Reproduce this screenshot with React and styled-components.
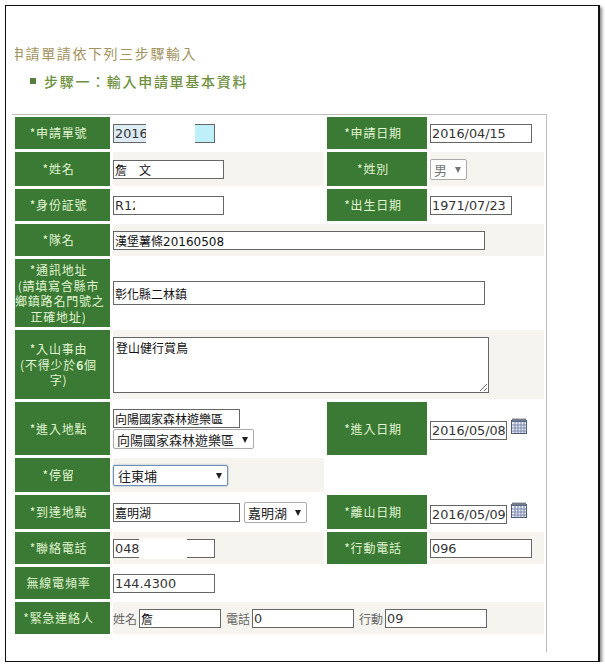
import styled, { createGlobalStyle } from "styled-components";

const GlobalStyle = createGlobalStyle`
  body {
    margin: 0;
    background: #fff;
    font-family: "DejaVu Sans", "Noto Sans CJK TC", sans-serif;
  }
`;

const CalendarIcon = () => (
  <CalendarSvg viewBox="0 0 16 16">
    <rect x="0.5" y="2.5" width="15" height="13" fill="#e6ebf5" stroke="#4e5a78" />
    <rect x="1" y="1" width="14" height="3" fill="#5a6680" />
    <path d="M2 0v3M4 0v3M6 0v3M8 0v3M10 0v3M12 0v3M14 0v3" stroke="#8d8f99" strokeWidth="1" />
    <path d="M1 7h14M1 10h14M1 13h14M4 4v11M7 4v11M10 4v11M13 4v11" stroke="#7b88aa" strokeWidth="1" />
  </CalendarSvg>
);

const App = () => {
  return (
    <Frame>
      <GlobalStyle />
      <Title>
        <TitleText>申請單請依下列三步驟輸入</TitleText>
      </Title>
      <Step>
        <Bullet />
        步驟一：輸入申請單基本資料
      </Step>
      <Panel>
        <FormTable>
          <colgroup>
            <col width="95" />
            <col width="211" />
            <col width="100" />
            <col width="114" />
          </colgroup>
          <tbody>
            <tr>
              <Label $h={32}>*申請單號</Label>
              <Cell>
                <Field>
                  <Input $w={102} $selected defaultValue="2016" />
                  <Patch $left={33} $w={49} />
                </Field>
              </Cell>
              <Label>*申請日期</Label>
              <Cell>
                <Input $w={102} defaultValue="2016/04/15" />
              </Cell>
            </tr>
            <tr>
              <Label $h={34}>*姓名</Label>
              <Cell $striped>
                <Input $w={111} $cjk defaultValue="詹　文" />
              </Cell>
              <Label>*姓別</Label>
              <Cell $striped>
                <Picker $w={37} $h={21} $muted>
                  <select defaultValue="男">
                    <option>男</option>
                  </select>
                </Picker>
              </Cell>
            </tr>
            <tr>
              <Label $h={32}>*身份証號</Label>
              <Cell>
                <Field>
                  <Input $w={111} defaultValue="R12" />
                  <Patch $left={22} $w={50} $inner />
                </Field>
              </Cell>
              <Label>*出生日期</Label>
              <Cell>
                <Input $w={82} defaultValue="1971/07/23" />
              </Cell>
            </tr>
            <tr>
              <Label $h={32}>*隊名</Label>
              <Cell colSpan={3} $striped>
                <Input $w={372} $cjk defaultValue="漢堡薯條20160508" />
              </Cell>
            </tr>
            <tr>
              <Label $h={68}>
                *通訊地址
                <br />
                (請填寫含縣市
                <br />
                鄉鎮路名門號之
                <br />
                正確地址)
              </Label>
              <Cell colSpan={3}>
                <Input $w={372} $h={24} $cjk defaultValue="彰化縣二林鎮" />
              </Cell>
            </tr>
            <tr>
              <Label $h={69}>
                *入山事由
                <br />
                (不得少於<b>6</b>個
                <br />
                字)
              </Label>
              <Cell colSpan={3} $striped>
                <Memo defaultValue="登山健行賞鳥" />
              </Cell>
            </tr>
            <tr>
              <Label $h={53}>*進入地點</Label>
              <Cell>
                <Stack>
                  <Input $w={127} $cjk defaultValue="向陽國家森林遊樂區" />
                  <Picker $w={141}>
                    <select defaultValue="向陽國家森林遊樂區">
                      <option>向陽國家森林遊樂區</option>
                    </select>
                  </Picker>
                </Stack>
              </Cell>
              <Label>*進入日期</Label>
              <Cell>
                <DateRow>
                  <Input $w={77} defaultValue="2016/05/08" />
                  <CalendarIcon />
                </DateRow>
              </Cell>
            </tr>
            <tr>
              <Label $h={34}>*停留</Label>
              <Cell $striped>
                <Picker $w={115} $h={21} $focused>
                  <select defaultValue="往東埔">
                    <option>往東埔</option>
                  </select>
                </Picker>
              </Cell>
              <td colSpan={2} />
            </tr>
            <tr>
              <Label $h={34}>*到達地點</Label>
              <Cell>
                <InlineRow>
                  <Input $w={127} $cjk defaultValue="嘉明湖" />
                  <Picker $w={63} $h={21}>
                    <select defaultValue="嘉明湖">
                      <option>嘉明湖</option>
                    </select>
                  </Picker>
                </InlineRow>
              </Cell>
              <Label>*離山日期</Label>
              <Cell>
                <DateRow>
                  <Input $w={77} defaultValue="2016/05/09" />
                  <CalendarIcon />
                </DateRow>
              </Cell>
            </tr>
            <tr>
              <Label $h={32}>*聯絡電話</Label>
              <Cell $striped>
                <Field>
                  <Input $w={102} defaultValue="048" />
                  <Patch $left={26} $w={48} />
                </Field>
              </Cell>
              <Label>*行動電話</Label>
              <Cell $striped>
                <Input $w={102} defaultValue="096" />
              </Cell>
            </tr>
            <tr>
              <Label $h={32}>無線電頻率</Label>
              <Cell colSpan={3}>
                <Input $w={102} defaultValue="144.4300" />
              </Cell>
            </tr>
            <tr>
              <Label $h={32}>*緊急連絡人</Label>
              <Cell colSpan={3} $striped>
                <ContactRow>
                  姓名
                  <Input $w={82} $cjk defaultValue="詹" />
                  <ContactLabel>電話</ContactLabel>
                  <Input $w={102} defaultValue="0" />
                  <ContactLabel>行動</ContactLabel>
                  <Input $w={102} defaultValue="09" />
                </ContactRow>
              </Cell>
            </tr>
          </tbody>
        </FormTable>
      </Panel>
    </Frame>
  );
};

const Frame = styled.div`
  width: 592px;
  height: 620px;
  margin: 5px 0 0 5px;
  padding-top: 35px;
  border: 1px solid #111;
  border-right-width: 2px;
  box-shadow: 2px 2px 3px #8a8a8a;
  font-family: "Noto Sans CJK TC", sans-serif;
`;

const Title = styled.div`
  margin-left: 9px;
  overflow: hidden;
  height: 24px;
  line-height: 24px;
`;

const TitleText = styled.div`
  margin-left: -5px;
  font-size: 14px;
  letter-spacing: 1.6px;
  color: #a3935e;
  white-space: nowrap;
`;

const Step = styled.div`
  display: flex;
  align-items: center;
  margin: 4px 0 0 24px;
  height: 24px;
  font-size: 14px;
  font-weight: 500;
  letter-spacing: 1.7px;
  color: #6f9140;
`;

const Bullet = styled.span`
  width: 6px;
  height: 6px;
  margin-right: 8px;
  background: #55803f;
`;

const Panel = styled.div`
  width: 534px;
  height: 537px;
  margin: 21px 0 0 6px;
  border-top: 1px solid #bdbdbd;
  border-right: 1px solid #bdbdbd;
`;

const FormTable = styled.table`
  border-collapse: separate;
  border-spacing: 3px;
  table-layout: fixed;
  width: 532px;
  margin-top: -1px;
`;

const Label = styled.td`
  box-sizing: border-box;
  height: ${(p) => (p.$h ? `${p.$h}px` : "auto")};
  padding: 0 8px 0 0;
  background: #3b7a34;
  color: #e0f5d2;
  font-size: 12px;
  line-height: 15.5px;
  letter-spacing: 0.8px;
  text-align: center;
  white-space: nowrap;
  overflow: hidden;
`;

const Cell = styled.td`
  padding: 0;
  background: ${(p) => (p.$striped ? "#f5f4ee" : "transparent")};
  vertical-align: middle;
`;

const Input = styled.input.attrs({ readOnly: true })`
  display: block;
  box-sizing: border-box;
  width: ${(p) => p.$w}px;
  height: ${(p) => p.$h || 19}px;
  padding: 0 1px;
  border: 1px solid #666;
  border-radius: 0;
  outline: none;
  background: ${(p) =>
    p.$selected ? "linear-gradient(90deg, #dcebf4 33px, #bff0fa 33px)" : "#fff"};
  color: ${(p) => (p.$cjk ? "#111" : "#333")};
  font-family: "DejaVu Sans", "Noto Sans CJK TC", sans-serif;
  font-size: ${(p) => (p.$cjk ? 12 : 12.8)}px;
`;

const Field = styled.div`
  position: relative;
  width: fit-content;
`;

const Patch = styled.span`
  position: absolute;
  top: ${(p) => (p.$inner ? 1 : -1)}px;
  bottom: ${(p) => (p.$inner ? 1 : -1)}px;
  left: ${(p) => p.$left}px;
  width: ${(p) => p.$w}px;
  background: #fff;
`;

const Picker = styled.div`
  position: relative;
  width: ${(p) => p.$w}px;
  height: ${(p) => p.$h || 20}px;

  select {
    appearance: none;
    box-sizing: border-box;
    display: block;
    width: 100%;
    height: 100%;
    padding: 0 0 0 ${(p) => (p.$focused ? 4 : 3)}px;
    border: 1px solid ${(p) => (p.$focused ? "#6f8fb0" : "#aaa")};
    border-radius: 2px;
    outline: none;
    background: #fff;
    box-shadow: ${(p) => (p.$focused ? "0 0 2px #7aa0c8" : "none")};
    color: ${(p) => (p.$muted ? "#777" : "#222")};
    font-family: "Noto Sans CJK TC", sans-serif;
    font-size: 13px;
  }

  &::after {
    content: "";
    position: absolute;
    right: 6px;
    top: 50%;
    margin-top: -2px;
    border-left: 3.5px solid transparent;
    border-right: 3.5px solid transparent;
    border-top: 6px solid ${(p) => (p.$muted ? "#777" : "#222")};
  }
`;

const Memo = styled.textarea.attrs({ readOnly: true })`
  display: block;
  box-sizing: border-box;
  width: 376px;
  height: 56px;
  padding: 1px 2px;
  border: 1px solid #666;
  border-radius: 0;
  outline: none;
  resize: both;
  background: #fff;
  color: #111;
  font-family: "DejaVu Sans", "Noto Sans CJK TC", sans-serif;
  font-size: 12px;
`;

const Stack = styled.div`
  display: flex;
  flex-direction: column;
  gap: 1px;
`;

const InlineRow = styled.div`
  display: flex;
  align-items: center;
  gap: 4px;
`;

const DateRow = styled.div`
  display: flex;
  align-items: flex-start;
  gap: 4px;
  margin-top: 4px;
`;

const CalendarSvg = styled.svg`
  width: 16px;
  height: 16px;
  margin-top: -3px;
`;

const ContactRow = styled.div`
  display: flex;
  align-items: center;
  gap: 2px;
  color: #666;
  font-size: 12px;
`;

const ContactLabel = styled.span`
  margin-left: 3px;
`;

export default App;
